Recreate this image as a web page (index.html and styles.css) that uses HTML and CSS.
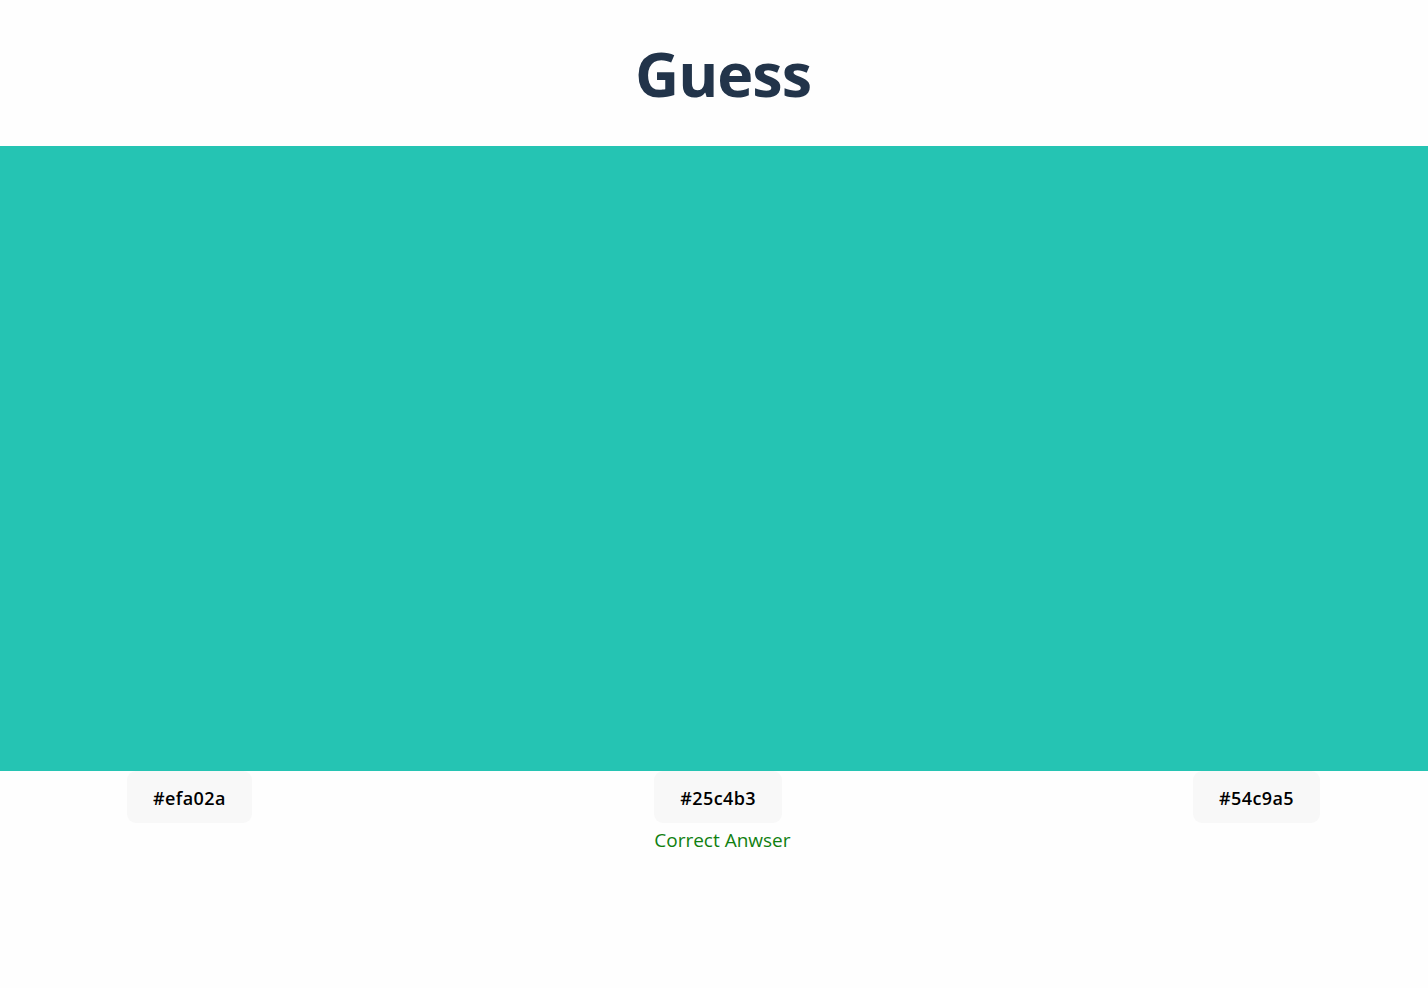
FILE: index.html
```html
<!DOCTYPE html>
<html>
<head>
<meta charset="utf-8">
<link rel="stylesheet" href="styles.css">
</head>
<body>
<header class="header"><h1 class="title">Guess</h1></header>
<div class="swatch"></div>
<div class="options">
  <div class="option"><button class="btn">#efa02a</button></div>
  <div class="option option-mid"><button class="btn">#25c4b3</button><div class="result">Correct Anwser</div></div>
  <div class="option"><button class="btn">#54c9a5</button></div>
</div>
</body>
</html>
```
FILE: styles.css
```css
html, body { margin: 0; padding: 0; background: #fefefe; }
body { font-family: "Open Sans", "Noto Sans", sans-serif; }
.header { height: 146px; display: flex; align-items: center; justify-content: center; padding-left: 18px; }
.title { margin: 0; font-size: 61px; font-weight: 700; color: #22344a; letter-spacing: -1px; }
.swatch { height: 625px; background: #25c4b3; }
.options { display: flex; justify-content: space-between; align-items: flex-start; padding: 0 108px 0 127px; }
.option { display: flex; flex-direction: column; align-items: flex-start; }
.btn { height: 52px; padding: 2px 26px 0; border: none; border-radius: 9px; background: #f8f8f8; font-family: inherit; font-size: 18px; font-weight: 600; letter-spacing: 0.4px; color: #000; }
.result { margin-top: 4px; font-size: 19px; color: #108010; }
```
